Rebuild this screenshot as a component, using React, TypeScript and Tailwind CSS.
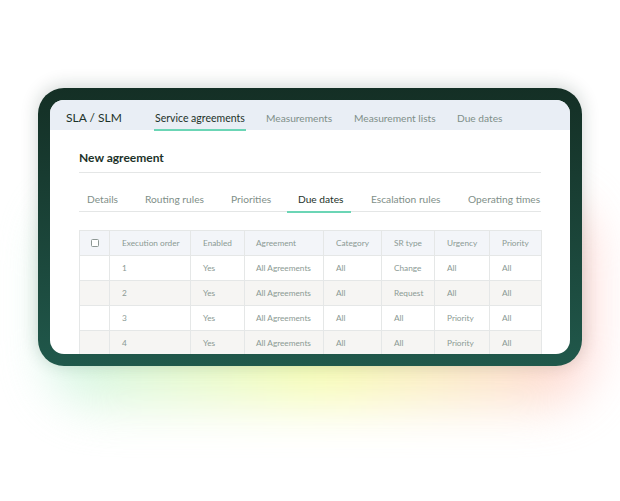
const topTabs = [
  { label: "Measurements", width: "w-[88px]" },
  { label: "Measurement lists", width: "w-[103px]" },
  { label: "Due dates", width: "w-[60px]" },
];

const subTabs = [
  { label: "Details", width: "w-[58px] pl-[8px]" },
  { label: "Routing rules", width: "w-[86px] pl-[8px]" },
  { label: "Priorities", width: "w-[64px] pl-[8px]" },
  { label: "Due dates", width: "w-[64px] pl-[11px]", active: true },
  { label: "Escalation rules", width: "w-[97px] pl-[20px]" },
  { label: "Operating times", width: "w-[93px] pl-[20px]" },
];

const columns = [
  "w-[30px]",
  "w-[81px]",
  "w-[54px]",
  "w-[79px]",
  "w-[58px]",
  "w-[53px]",
  "w-[55px]",
  "w-[52px]",
];

const rows = [
  ["1", "Yes", "All Agreements", "All", "Change", "All", "All"],
  ["2", "Yes", "All Agreements", "All", "Request", "All", "All"],
  ["3", "Yes", "All Agreements", "All", "All", "Priority", "All"],
  ["4", "Yes", "All Agreements", "All", "All", "Priority", "All"],
];

const headers = [
  "Execution order",
  "Enabled",
  "Agreement",
  "Category",
  "SR type",
  "Urgency",
  "Priority",
];

export default function App() {
  return (
    <div className="relative w-[620px] h-[501px] overflow-hidden bg-white font-['Lato',sans-serif]">
      {/* coloured glow behind the frame */}
      <div className="absolute left-[48px] top-[200px] w-[544px] h-[205px] blur-[24px] rounded-[50px] opacity-75 bg-gradient-to-r from-[#c4f2e0] via-[#f3fb9a] to-[#ffc8c8]" />

      <div className="absolute left-[38px] top-[88px] w-[544px] h-[278px] rounded-[26px] p-[12px] bg-gradient-to-b from-[#142f25] to-[#20584b] shadow-[0_-2px_18px_rgba(20,47,37,0.2)]">
        <div className="w-full h-full rounded-[14px] overflow-hidden bg-white">
          <div className="flex h-[30px] bg-[#e9eef5] pl-[16px]">
            <div className="w-[88px] pt-[10px] text-[12px] leading-[16px] text-[#1c3229] whitespace-nowrap">SLA / SLM</div>
            <div className="w-[92px] h-[31px] mr-[20px] pl-[1px] pt-[10px] text-[10.5px] leading-[16px] text-[#1c3229] border-b-2 border-[#6bd5b5] whitespace-nowrap">
              Service agreements
            </div>
            {topTabs.map((tab) => (
              <div key={tab.label} className={`${tab.width} pt-[10px] text-[10.2px] leading-[16px] text-[#7f8f89] whitespace-nowrap`}>
                {tab.label}
              </div>
            ))}
          </div>

          <div className="pl-[29px] pr-[29px]">
            <div className="h-[43px] pt-[20px] border-b border-[#e4e6e6] text-[12px] leading-[16px] font-bold text-[#1c3229]">
              New agreement
            </div>
            <div className="flex h-[39px] pt-[18px] border-b border-[#e4e6e6]">
              {subTabs.map((tab) => (
                <div
                  key={tab.label}
                  className={`${tab.width} h-[22px] text-[10.2px] leading-[16px] whitespace-nowrap ${
                    tab.active
                      ? "text-[#1c3229] border-b-2 border-[#6bd5b5]"
                      : "text-[#7f8f89]"
                  }`}
                >
                  {tab.label}
                </div>
              ))}
            </div>

            <table className="mt-[18px] w-[462px] table-fixed border-collapse text-[8.25px] text-[#8b9a94]">
              <colgroup>
                {columns.map((width, i) => (
                  <col key={i} className={width} />
                ))}
              </colgroup>
              <thead>
                <tr className="h-[25px] bg-[#f3f5f9]">
                  <th className="border border-[#e5e7e7] text-center font-normal">
                    <span className="block mx-auto w-[8px] h-[8px] rounded-[1.5px] border border-[#8d9794] bg-white" />
                  </th>
                  {headers.map((header, j) => (
                    <th
                      key={header}
                      className={`border border-[#e5e7e7] text-left font-normal whitespace-nowrap ${j === 2 ? "pl-[11px]" : "pl-[12px]"}`}
                    >
                      {header}
                    </th>
                  ))}
                </tr>
              </thead>
              <tbody>
                {rows.map((row, i) => (
                  <tr key={i} className={`h-[25px] ${i % 2 === 1 ? "bg-[#f6f5f3]" : "bg-white"}`}>
                    <td className="border border-[#e5e7e7]" />
                    {row.map((cell, j) => (
                      <td
                        key={j}
                        className={`border border-[#e5e7e7] whitespace-nowrap ${j === 2 ? "pl-[11px]" : "pl-[12px]"}`}
                      >
                        {cell}
                      </td>
                    ))}
                  </tr>
                ))}
              </tbody>
            </table>
          </div>
        </div>
      </div>
    </div>
  );
}
